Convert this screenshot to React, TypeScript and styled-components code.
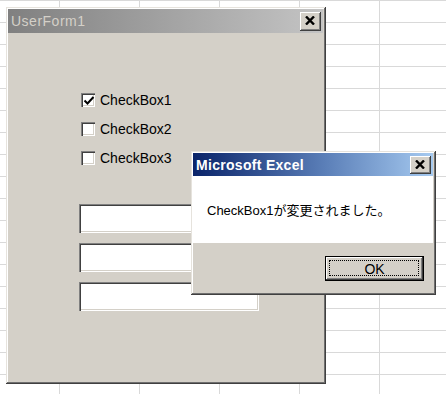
import React from "react";
import styled, { createGlobalStyle } from "styled-components";

const GlobalStyle = createGlobalStyle`
  html, body {
    margin: 0;
    padding: 0;
    background: #fff;
  }
  body {
    font-family: "Liberation Sans", "Noto Sans CJK JP", sans-serif;
  }
`;

const checkLabels = ["CheckBox1", "CheckBox2", "CheckBox3"];

export default function App() {
  return (
    <>
      <GlobalStyle />
      <Sheet>
        {/* UserForm */}
        <Win $x={6} $y={7} $w={320} $h={377}>
          <TitleBar $active={false} $h={24}>
            <TitleText $active={false}>UserForm1</TitleText>
            <CloseBtn $h={19}>
              <XGlyph />
            </CloseBtn>
          </TitleBar>
          <FormClient>
            <CheckList>
              {checkLabels.map((label, i) => (
                <CheckRow key={label}>
                  <CheckBox>{i === 0 && <CheckMark />}</CheckBox>
                  <CheckText>{label}</CheckText>
                </CheckRow>
              ))}
            </CheckList>
            <TextBoxList>
              <TextBox />
              <TextBox />
              <TextBox />
            </TextBoxList>
          </FormClient>
        </Win>

        {/* MsgBox */}
        <Win $x={191} $y={151} $w={245} $h={144}>
          <TitleBar $active $h={23}>
            <TitleText $active>Microsoft Excel</TitleText>
            <CloseBtn $h={18}>
              <XGlyph />
            </CloseBtn>
          </TitleBar>
          <MsgBody>CheckBox1が変更されました。</MsgBody>
          <MsgFooter>
            <OkButton>OK</OkButton>
          </MsgFooter>
        </Win>
      </Sheet>
    </>
  );
}

function XGlyph() {
  return (
    <svg width="10" height="9" viewBox="0 0 10 9">
      <path
        d="M1 0.5 L9 8.5 M9 0.5 L1 8.5"
        stroke="#000"
        strokeWidth="2.4"
        fill="none"
      />
    </svg>
  );
}

function CheckMark() {
  return (
    <svg width="12" height="12" viewBox="0 0 12 12">
      <path
        d="M1.5 5.5 L4.5 8.5 L10.5 2"
        stroke="#000"
        strokeWidth="2"
        fill="none"
      />
    </svg>
  );
}

/* ===== styled components ===== */

const Sheet = styled.div`
  position: relative;
  width: 446px;
  height: 394px;
  overflow: hidden;
  background-color: #fff;
  background-image: linear-gradient(to right, #d9d9d9 1px, transparent 1px),
    linear-gradient(to bottom, #d9d9d9 1px, transparent 1px);
  background-size: 80px 22px;
  background-position: 59px 0;
`;

// windows float on the sheet, so they keep their own place
const Win = styled.div<{ $x: number; $y: number; $w: number; $h: number }>`
  position: absolute;
  left: ${(p) => p.$x}px;
  top: ${(p) => p.$y}px;
  width: ${(p) => p.$w}px;
  height: ${(p) => p.$h}px;
  box-sizing: border-box;
  padding: 2px 3px 3px 2px;
  background: #d4d0c8;
  display: flex;
  flex-direction: column;
  box-shadow: inset -1px -1px #404040, inset 1px 1px #e6e3dd,
    inset -2px -2px #6f6f6f, inset 2px 2px #fff;
`;

const TitleBar = styled.div<{ $active: boolean; $h: number }>`
  height: ${(p) => p.$h}px;
  flex-shrink: 0;
  display: flex;
  align-items: center;
  justify-content: space-between;
  padding: 0 2px 0 3px;
  background: ${(p) =>
    p.$active
      ? "linear-gradient(to right, #0a246a 0%, #5b7fb8 55%, #a6caf0 100%)"
      : "linear-gradient(to right, #808080, #c4c4c4)"};
`;

const TitleText = styled.span<{ $active: boolean }>`
  font-size: 14px;
  font-weight: ${(p) => (p.$active ? 700 : 400)};
  letter-spacing: ${(p) => (p.$active ? "0.3px" : "0.5px")};
  color: ${(p) => (p.$active ? "#fff" : "#d4d0c8")};
  white-space: nowrap;
`;

const CloseBtn = styled.div<{ $h: number }>`
  width: 21px;
  height: ${(p) => p.$h}px;
  box-sizing: border-box;
  display: flex;
  align-items: center;
  justify-content: center;
  padding: 0 1px 1px 0;
  background: #d4d0c8;
  box-shadow: inset -1px -1px #404040, inset 1px 1px #fff,
    inset -2px -2px #808080;
`;

const FormClient = styled.div`
  flex: 1;
  display: flex;
  flex-direction: column;
  gap: 39px;
  padding: 60px 0 0 71px;
`;

const CheckList = styled.div`
  display: flex;
  flex-direction: column;
  gap: 15px;
  padding-left: 2px;
`;

const CheckRow = styled.div`
  display: flex;
  align-items: center;
  gap: 5px;
  height: 14px;
`;

const CheckBox = styled.div`
  width: 14px;
  height: 14px;
  box-sizing: border-box;
  background: #fff;
  display: flex;
  align-items: center;
  justify-content: center;
  padding: 1px 0 0 1px;
  box-shadow: inset 1px 1px #808080, inset 2px 2px #404040,
    inset -1px -1px #fff, inset -2px -2px #d4d0c8;
`;

const CheckText = styled.span`
  font-size: 14px;
  line-height: 14px;
  color: #000;
`;

const TextBoxList = styled.div`
  display: flex;
  flex-direction: column;
  gap: 10px;
`;

const TextBox = styled.div`
  width: 180px;
  height: 29px;
  background: #fff;
  box-shadow: inset 1px 1px #808080, inset 2px 2px #404040,
    inset -1px -1px #fff, inset -2px -2px #d4d0c8;
`;

const MsgBody = styled.div`
  height: 67px;
  flex-shrink: 0;
  box-sizing: border-box;
  background: #fff;
  padding: 27px 0 0 14px;
  font-size: 13px;
  line-height: 16px;
  color: #000;
  white-space: nowrap;
`;

const MsgFooter = styled.div`
  flex: 1;
  display: flex;
  justify-content: flex-end;
  align-items: flex-start;
  padding: 13px 9px 0 0;
`;

const OkButton = styled.div`
  position: relative;
  width: 99px;
  height: 25px;
  box-sizing: border-box;
  border: 1px solid #000;
  background: #d4d0c8;
  display: flex;
  align-items: center;
  justify-content: center;
  font-size: 14px;
  color: #000;
  box-shadow: inset -1px -1px #404040, inset 1px 1px #fff,
    inset -2px -2px #808080;

  &::after {
    content: "";
    position: absolute;
    inset: 3px 4px 4px 3px;
    border: 1px dotted #000;
  }
`;
